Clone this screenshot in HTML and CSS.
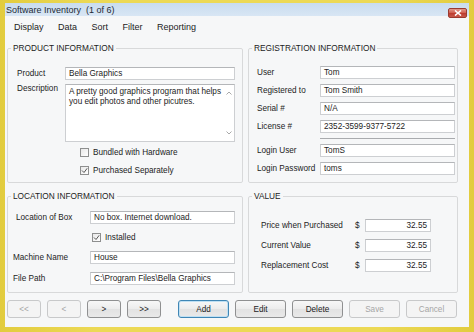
FILE: index.html
```html
<!DOCTYPE html>
<html>
<head>
<meta charset="utf-8">
<title>Software Inventory</title>
<link rel="stylesheet" href="styles.css">
</head>
<body>
<div class="window">
  <div class="titlebar">
    <span class="title">Software Inventory&nbsp; (1 of 6)</span>
    <span class="close"><svg width="8" height="6" viewBox="0 0 8 6"><path d="M1 0.5 L7 5.5 M7 0.5 L1 5.5" stroke="#fff" stroke-width="1.6"/></svg></span>
  </div>
  <div class="client">
    <nav class="menubar">
      <span>Display</span><span>Data</span><span>Sort</span><span>Filter</span><span>Reporting</span>
    </nav>
    <div class="groups">
      <fieldset class="group">
        <legend>PRODUCT INFORMATION</legend>
        <div class="form product-form">
          <label>Product</label>
          <div class="field">Bella Graphics</div>
          <label class="top">Description</label>
          <div class="field area">
            <div class="area-text">A pretty good graphics program that helps<br>you edit photos and other picutres.</div>
            <div class="scroll">
              <svg width="6" height="4" viewBox="0 0 6 4"><path d="M0.5 3.5 L3 1 L5.5 3.5" fill="none" stroke="#a8a8a8"/></svg>
              <svg width="6" height="4" viewBox="0 0 6 4"><path d="M0.5 0.5 L3 3 L5.5 0.5" fill="none" stroke="#a8a8a8"/></svg>
            </div>
          </div>
        </div>
        <div class="checks">
          <div class="check"><span class="box"></span>Bundled with Hardware</div>
          <div class="check"><span class="box"><svg width="7" height="7" viewBox="0 0 7 7"><path d="M1 3.5 L3 5.5 L6.2 1.3" fill="none" stroke="#555" stroke-width="1"/></svg></span>Purchased Separately</div>
        </div>
      </fieldset>

      <fieldset class="group">
        <legend>REGISTRATION INFORMATION</legend>
        <div class="form reg-form">
          <label>User</label><div class="field">Tom</div>
          <label>Registered to</label><div class="field">Tom Smith</div>
          <label>Serial #</label><div class="field">N/A</div>
          <label>License #</label><div class="field">2352-3599-9377-5722</div>
          <div class="sep"></div>
          <label>Login User</label><div class="field">TomS</div>
          <label>Login Password</label><div class="field">toms</div>
        </div>
      </fieldset>

      <fieldset class="group">
        <legend>LOCATION INFORMATION</legend>
        <div class="form loc-form">
          <label class="indent">Location of Box</label><div class="field">No box. Internet download.</div>
          <div class="check installed"><span class="box"><svg width="7" height="7" viewBox="0 0 7 7"><path d="M1 3.5 L3 5.5 L6.2 1.3" fill="none" stroke="#555" stroke-width="1"/></svg></span>Installed</div>
          <label>Machine Name</label><div class="field">House</div>
          <label>File Path</label><div class="field">C:\Program Files\Bella Graphics</div>
        </div>
      </fieldset>

      <fieldset class="group">
        <legend>VALUE</legend>
        <div class="form value-form">
          <label>Price when Purchased</label><span class="cur">$</span><div class="field num">32.55</div>
          <label>Current Value</label><span class="cur">$</span><div class="field num">32.55</div>
          <label>Replacement Cost</label><span class="cur">$</span><div class="field num">32.55</div>
        </div>
      </fieldset>
    </div>
    <div class="buttons">
      <button class="btn nav" disabled>&lt;&lt;</button>
      <button class="btn nav" disabled>&lt;</button>
      <button class="btn nav">&gt;</button>
      <button class="btn nav">&gt;&gt;</button>
      <button class="btn action default first">Add</button>
      <button class="btn action">Edit</button>
      <button class="btn action">Delete</button>
      <button class="btn action" disabled>Save</button>
      <button class="btn action" disabled>Cancel</button>
    </div>
  </div>
</div>
</body>
</html>
```
FILE: styles.css
```css
html, body {
  margin: 0;
  padding: 0;
}
body {
  font-family: "Liberation Sans", Arial, sans-serif;
  font-size: 8.2px;
  color: #1c1c1c;
  background: #fff;
}
.window {
  width: 474px;
  height: 332px;
  box-sizing: border-box;
  padding: 3px 5px 5px 5px;
  background: linear-gradient(90deg, #e2cc3e, #ecd955 20%, #ecd955 80%, #e2cc3e);
  display: flex;
  flex-direction: column;
}
.titlebar {
  height: 13px;
  position: relative;
  background: linear-gradient(#c8dcef, #d8e6f4);
  display: flex;
  align-items: center;
  padding-left: 1px;
  font-size: 9px;
  color: #1e2a36;
}
.close {
  position: absolute;
  left: 443px;
  top: 5px;
  width: 19px;
  height: 10px;
  box-sizing: border-box;
  border: 1px solid #9a3a30;
  border-radius: 2px;
  background: linear-gradient(#e39a8c, #cf5a4c 50%, #bd3c2f 55%, #c9584a);
  display: flex;
  align-items: center;
  justify-content: center;
  z-index: 1;
}
.close svg { display: block; }
.client {
  flex: 1;
  background: #f6f7f8;
  padding: 0 11px 0 2px;
  display: flex;
  flex-direction: column;
}
.menubar {
  height: 22px;
  display: flex;
  align-items: center;
  font-size: 9px;
}
.menubar span {
  padding: 0 7.5px 0 7px;
}
.groups {
  margin-top: 5px;
  display: grid;
  grid-template-columns: 236px 210px;
  grid-template-rows: 140px 102px;
  column-gap: 5px;
  row-gap: 8px;
}
.group {
  margin: 0;
  padding: 0;
  min-width: 0;
  box-sizing: border-box;
  border: 1px solid #d8d9da;
  border-radius: 2px;
}
.group legend {
  margin-left: 3px;
  padding: 0 2px;
  line-height: 10px;
  font-size: 8.3px;
  color: #1c1c1c;
}
.form {
  display: grid;
  align-items: center;
}
.form label {
  white-space: nowrap;
  line-height: 10px;
}
.form label.top {
  align-self: start;
  margin-top: 0px;
}
.field {
  height: 13px;
  box-sizing: border-box;
  border: 1px solid #cdcfd2;
  border-top-color: #b4b6b9;
  background: #fff;
  padding: 0 3px;
  line-height: 11px;
  white-space: nowrap;
  overflow: hidden;
}
.product-form {
  padding: 14px 7px 0 9px;
  grid-template-columns: 48px 170px;
  row-gap: 4px;
}
.field.area {
  height: 58px;
  display: flex;
  padding: 0;
}
.area-text {
  flex: 1;
  padding: 2px 0 0 3px;
  line-height: 10px;
  white-space: nowrap;
}
.scroll {
  width: 10px;
  display: flex;
  flex-direction: column;
  justify-content: space-between;
  align-items: center;
  padding: 6px 0 6px;
}
.scroll svg { display: block; }
.checks {
  padding: 5px 0 0 72px;
  display: flex;
  flex-direction: column;
  row-gap: 7px;
}
.check {
  display: flex;
  align-items: center;
  gap: 4px;
  height: 11px;
  white-space: nowrap;
}
.box {
  width: 9px;
  height: 9px;
  box-sizing: border-box;
  border: 1px solid #8e8f8f;
  background: linear-gradient(135deg, #e8e8e8, #ffffff);
  display: flex;
  align-items: center;
  justify-content: center;
}
.box svg { display: block; }
.reg-form {
  padding: 13px 2px 0 8px;
  grid-template-columns: 63px 135px;
  row-gap: 5px;
}
.sep {
  grid-column: 2;
  height: 1px;
  background: #a9abae;
}
.loc-form {
  padding: 10px 7px 0 5px;
  grid-template-columns: 77px 145px;
  grid-template-rows: 13px 11px 13px 13px;
  row-gap: 8px;
}
.loc-form label.indent {
  padding-left: 3px;
}
.installed {
  grid-column: 2;
  margin-left: 2px;
}
.value-form {
  padding: 18px 0 0 12px;
  grid-template-columns: 94px 10px 66px;
  row-gap: 7px;
}
.cur {
  line-height: 10px;
}
.field.num {
  text-align: right;
}
.buttons {
  margin-top: 7px;
  display: flex;
  gap: 6px;
  padding-left: 0;
}
.btn {
  height: 18px;
  box-sizing: border-box;
  margin: 0;
  padding: 0;
  font-family: inherit;
  font-size: 8.2px;
  color: #1c1c1c;
  border: 1px solid #8f9091;
  border-radius: 3px;
  background: linear-gradient(#f7f7f7, #ececec 50%, #e2e2e2 51%, #e9e9e9);
}
.btn.nav { width: 34px; }
.btn.action { width: 51px; }
.btn.first { margin-left: 11px; }
.btn.default {
  border-color: #3f86b5;
  box-shadow: inset 0 0 0 1px #bfe0f3;
}
.btn:disabled {
  color: #a6a6a6;
  border-color: #c8c9ca;
  background: #f4f4f4;
}
```
